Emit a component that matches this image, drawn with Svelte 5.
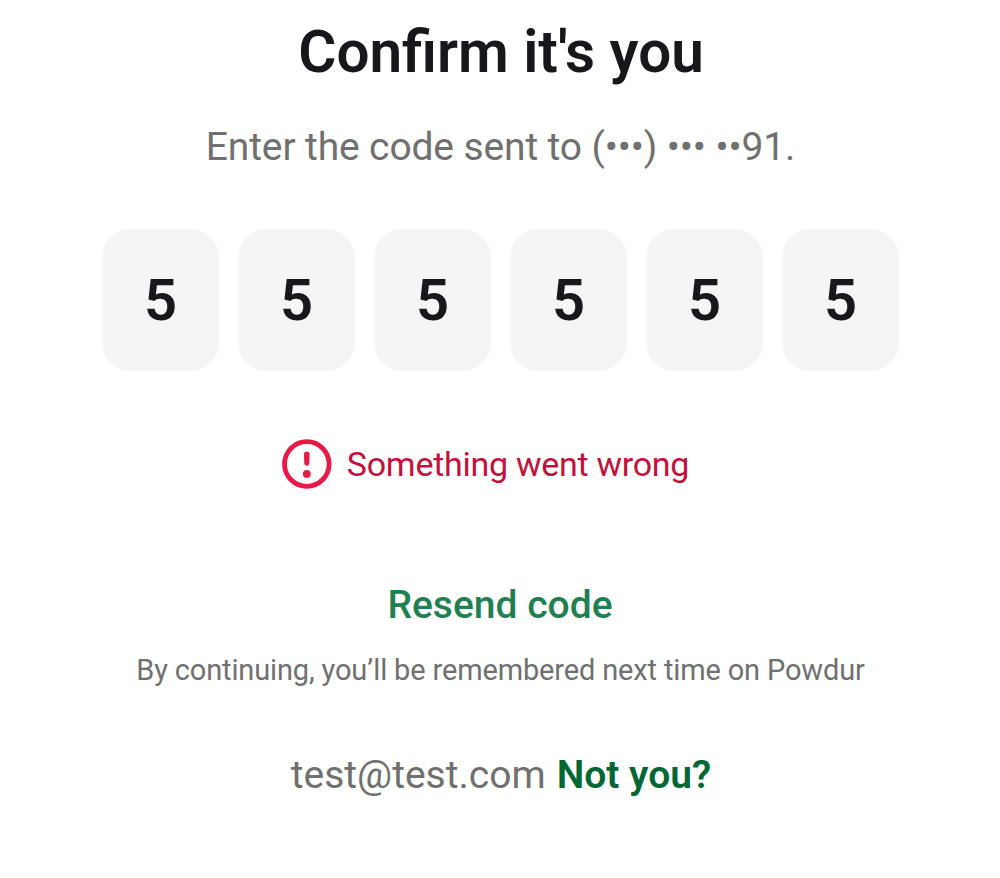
<script>
  const digits = ['5', '5', '5', '5', '5', '5'];
</script>

<main>
  <h1><span>Confirm it's you</span></h1>
  <p class="sub"><span>Enter the code sent to (•••) ••• ••91.</span></p>
  <div class="code">
    {#each digits as d}
      <div class="cell"><span>{d}</span></div>
    {/each}
  </div>
  <div class="error">
    <svg width="50" height="50" viewBox="0 0 50 50" fill="#e61947">
      <circle cx="24.8" cy="25" r="22.3" fill="none" stroke="#e61947" stroke-width="4.8" />
      <path d="M22 15.2Q22 12.4 24.8 12.4Q27.6 12.4 27.6 15.2L27.3 24.4Q27.2 26.8 24.8 26.8Q22.4 26.8 22.3 24.4Z" />
      <circle cx="24.8" cy="34.9" r="3.9" />
    </svg>
    <span>Something went wrong</span>
  </div>
  <button class="resend"><span>Resend code</span></button>
  <p class="note"><span>By continuing, you’ll be remembered next time on Powdur</span></p>
  <div class="account"><span class="mail">test@test.com</span><button class="not"><span>Not you?</span></button></div>
</main>

<style>
  :global(body) { background: #fff; }
  main {
    box-sizing: border-box;
    width: 1000px;
    height: 878px;
    padding-top: 16px;
    display: flex;
    flex-direction: column;
    align-items: center;
    font-family: Roboto, sans-serif;
    overflow: hidden;
    white-space: nowrap;
    color: #707070;
  }
  h1, p { margin: 0; }
  button { border: 0; padding: 0; background: none; font-family: inherit; cursor: pointer; }
  h1 { padding-left: 2px; font-size: 58.4px; line-height: 72px; font-weight: 600; color: #18181a; }
  .sub { margin-top: 35px; padding-left: 1px; font-size: 39px; line-height: 48px; letter-spacing: -0.13px; }
  .code { margin-top: 58.4px; padding-left: 1px; display: flex; gap: 19px; }
  .cell {
    width: 117px;
    height: 141.6px;
    border-radius: 29px;
    background: #f5f5f5;
    display: flex;
    align-items: center;
    justify-content: center;
    font-size: 58px;
    font-weight: 600;
    color: #18181a;
  }
  .error { margin-top: 68px; margin-right: 29px; display: flex; align-items: center; gap: 15px; font-size: 34px; line-height: 50px; letter-spacing: -0.27px; color: #c0123c; }
  .error svg { display: block; }
  .resend { margin-top: 92px; font-size: 39px; line-height: 48px; font-weight: 500; color: #217f51; }
  .note { margin-top: 23px; padding-left: 1px; font-size: 29px; line-height: 36px; letter-spacing: -0.15px; }
  .account { margin-top: 63px; padding-left: 2px; display: flex; gap: 11px; font-size: 39px; line-height: 48px; }
  .not { font-size: 39px; line-height: 48px; font-weight: 600; color: #006635; }
</style>
